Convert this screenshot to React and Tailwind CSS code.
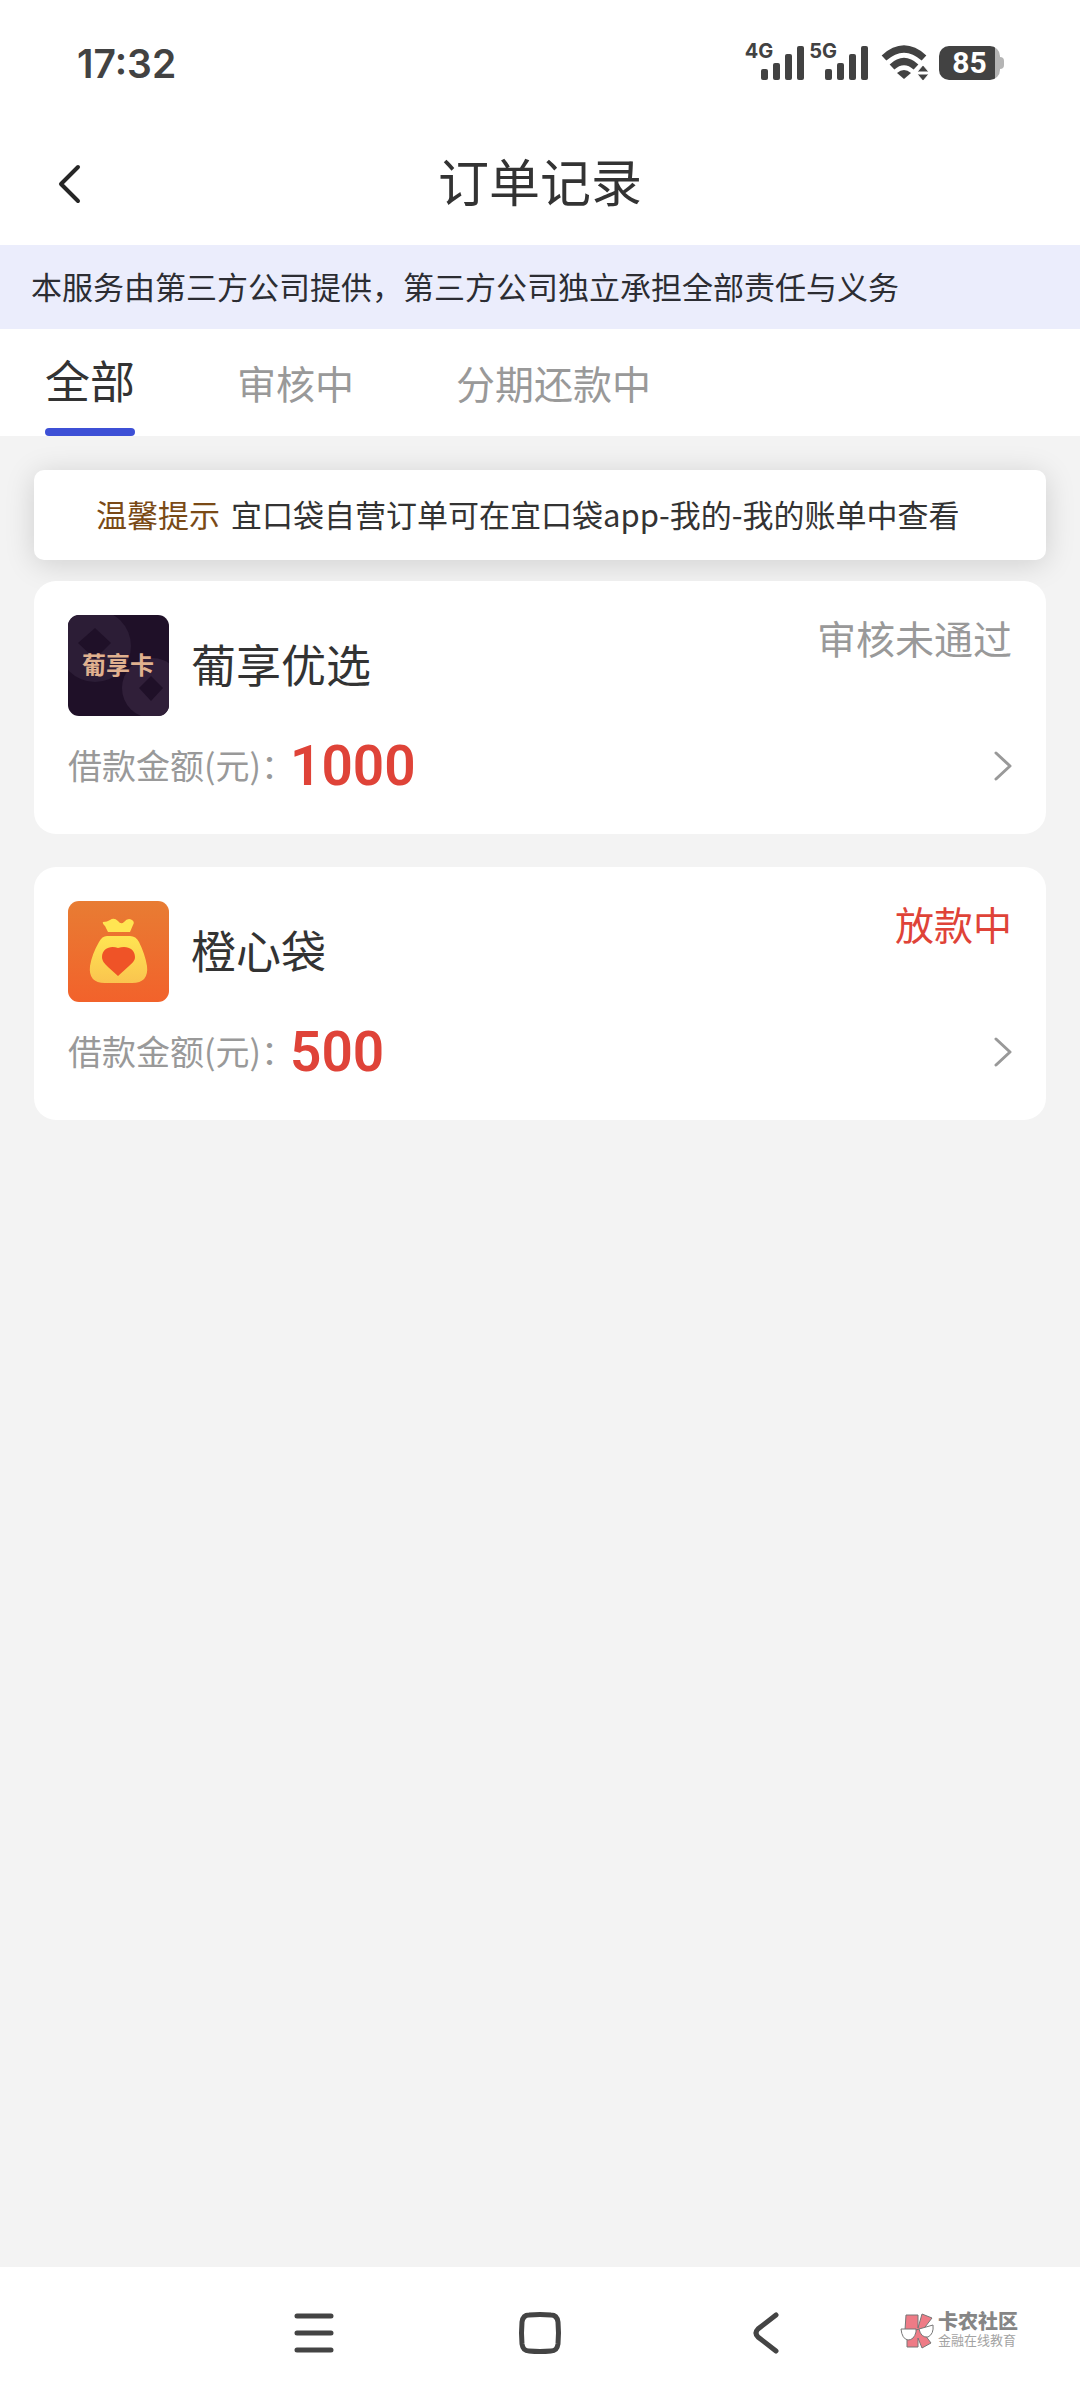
import React, { useState } from 'react';

const TABS = ['全部', '审核中', '分期还款中'];

const ORDERS = [
  { id: 1, name: '葡享优选', amount: '1000', status: '审核未通过', tone: 'text-[#999999]', Logo: PuxiangLogo },
  { id: 2, name: '橙心袋', amount: '500', status: '放款中', tone: 'text-[#df4338]', Logo: ChengxinLogo },
];

function PuxiangLogo() {
  return (
    <svg viewBox="0 0 101 101" className="h-full w-full" aria-hidden="true">
      <rect width="101" height="101" fill="#1f1028" />
      <circle cx="27" cy="31" r="36" fill="#2c1d36" />
      <path d="M27 13 43 28 27 44 10 28Z" fill="#1f1028" />
      <circle cx="84" cy="73" r="30" fill="#301f39" />
      <path d="M83 61 95 73 83 86 71 73Z" fill="#1f1028" />
      <text
        x="50"
        y="59"
        textAnchor="middle"
        fontSize="24"
        fontWeight="700"
        fill="#e0b18f"
        fontFamily="'Noto Sans CJK SC', sans-serif"
      >
        葡享卡
      </text>
    </svg>
  );
}

function ChengxinLogo() {
  return (
    <svg viewBox="0 0 101 101" className="h-full w-full" aria-hidden="true">
      <defs>
        <linearGradient id="orangeBg" x1="0" y1="0" x2="0" y2="1">
          <stop offset="0" stopColor="#e87c33" />
          <stop offset="1" stopColor="#f2622b" />
        </linearGradient>
        <linearGradient id="bag" x1="0" y1="0" x2="0" y2="1">
          <stop offset="0" stopColor="#ffe552" />
          <stop offset="1" stopColor="#fac44f" />
        </linearGradient>
      </defs>
      <rect width="101" height="101" fill="url(#orangeBg)" />
      <path
        d="M35 21C38 21 40 20 42 19Q46 16 50 20Q53 24 56 21Q60 16 64 19Q67 21 65 24L62 31H40L37 25Q34 22 35 21Z"
        fill="#ffe552"
      />
      <path
        d="M39 35H62Q68 35 71 41Q77 53 79 65Q81 82 64 82H37Q20 82 22 65Q24 53 31 41Q34 35 39 35Z"
        fill="url(#bag)"
      />
      <path d="M50 47C43 44 34 47 34 56C34 60 37 63 40 66L50 75L61 65C64 62 67 60 67 56C67 47 58 44 50 47Z" fill="#ef5327" />
    </svg>
  );
}

function Signal({ label }) {
  return (
    <span className="flex">
      <span className="-mr-3 self-start text-[20px] leading-4 font-bold">{label}</span>
      <svg width="44" height="40" viewBox="0 0 44 40" fill="currentColor" aria-hidden="true">
        <rect x="0" y="26" width="7" height="11" rx="2" />
        <rect x="12" y="20" width="7" height="17" rx="2" />
        <rect x="24" y="11" width="7" height="26" rx="2" />
        <rect x="36" y="3" width="7" height="34" rx="2" />
      </svg>
    </span>
  );
}

function StatusBar() {
  return (
    <div className="flex h-[122px] items-center justify-between pt-1 pr-[76px] pl-[77px] font-['Inter','Noto_Sans',sans-serif] text-[#424242]">
      <time className="text-[39px] leading-none font-semibold">17:32</time>
      <div className="flex items-center">
        <div className="flex gap-1">
          <Signal label="4G" />
          <Signal label="5G" />
        </div>
        <svg className="ml-3" width="48" height="36" viewBox="0 0 48 36" fill="none" aria-label="Wi-Fi">
          <path d="M3 13Q23 -5 43 13" stroke="currentColor" strokeWidth="7" />
          <path d="M11 22Q23 11 35 22" stroke="currentColor" strokeWidth="7" />
          <path d="M16 28Q23 22 30 28L23 34Z" fill="currentColor" />
          <path d="M36 27 42 20 48 27Z M36 29 42 36 48 29Z" fill="currentColor" stroke="#fff" strokeWidth="1" />
        </svg>
        <div className="ml-2.5 flex items-center">
          <span className="flex h-[34px] w-[61px] items-center justify-center rounded-[10px] bg-[linear-gradient(90deg,#424242_56px,#b5b5b5_56px)] font-['Roboto',sans-serif] text-[30px] leading-none font-bold text-white">
            85
          </span>
          <span className="h-3 w-1 rounded-r-full bg-[#b5b5b5]" />
        </div>
      </div>
    </div>
  );
}

function OrderCard({ order }) {
  const { Logo } = order;
  return (
    <li>
      <a href={`#order-${order.id}`} className="block rounded-[22px] bg-white p-[34px]">
        <div className="flex items-start justify-between">
          <div className="flex items-center gap-[22px]">
            <span className="h-[101px] w-[101px] overflow-hidden rounded-[11px]">
              <Logo />
            </span>
            <h2 className="pb-1 text-[45px] leading-none">{order.name}</h2>
          </div>
          <span className={`text-[39px] leading-[44px] ${order.tone}`}>{order.status}</span>
        </div>
        <div className="mt-4 flex h-[68px] items-center">
          <span className="w-[222px] pb-0.5 text-[34px] leading-none whitespace-nowrap text-[#999999]">借款金额(元)：</span>
          <span className="font-['Roboto','Noto_Sans',sans-serif] text-[55px] leading-none font-semibold text-[#df4338]">
            {order.amount}
          </span>
          <svg
            className="ml-auto"
            width="18"
            height="30"
            viewBox="0 0 18 30"
            fill="none"
            stroke="#999999"
            strokeWidth="3"
            strokeLinecap="round"
            strokeLinejoin="round"
            aria-hidden="true"
          >
            <path d="M2 2 16 15 2 28" />
          </svg>
        </div>
      </a>
    </li>
  );
}

function Watermark() {
  return (
    <div className="absolute top-[43px] right-[62px] flex items-center gap-0.5 font-['Liberation_Sans','Noto_Sans_CJK_SC',sans-serif]">
      <svg width="36" height="40" viewBox="0 0 36 40" stroke="#777777" aria-hidden="true">
        <path d="M6 5H18V18L22 4 32 8 22 21 31 33 22 38 18 28V37H7V22L5 20Z" fill="#ee7b86" strokeWidth="1" />
        <path d="M1 19H16V22Q14 30 8 30 2 29 1 19Z" fill="#fff" strokeWidth="1" />
        <path d="M19 19 33 15Q34 24 28 27 21 28 19 19Z" fill="#fff" strokeWidth="1" />
        <path d="M16 20 19 19" strokeWidth="1" />
      </svg>
      <div className="flex flex-col">
        <span className="text-[20px] leading-[22px] font-black text-[#868686]">卡农社区</span>
        <span className="text-[13px] leading-4 text-[#a3a3a3]">金融在线教育</span>
      </div>
    </div>
  );
}

function SystemNav() {
  return (
    <nav className="relative flex h-[133px] justify-center bg-white pb-[2px] text-[#444444]">
      <button type="button" aria-label="最近任务" className="flex w-[226px] items-center justify-center">
        <svg width="40" height="44" viewBox="0 0 40 44" stroke="currentColor" strokeWidth="5" strokeLinecap="round">
          <path d="M3 5H37M3 22H37M3 39H37" />
        </svg>
      </button>
      <button type="button" aria-label="主屏幕" className="flex w-[226px] items-center justify-center">
        <svg width="44" height="44" viewBox="0 0 44 44" fill="none" stroke="currentColor" strokeWidth="5">
          <path d="M11 4Q22 3 33 4Q39 4 40 11Q41 22 40 33Q39 40 33 40Q22 41 11 40Q5 40 4 33Q3 22 4 11Q5 4 11 4Z" />
        </svg>
      </button>
      <button type="button" aria-label="返回" className="flex w-[226px] items-center justify-center">
        <svg
          width="28"
          height="44"
          viewBox="0 0 28 44"
          fill="none"
          stroke="currentColor"
          strokeWidth="5"
          strokeLinecap="round"
        >
          <path d="M24 4 6 18Q2 22 6 26L24 40" />
        </svg>
      </button>
      <Watermark />
    </nav>
  );
}

export default function App() {
  const [active, setActive] = useState(TABS[0]);

  return (
    <div className="flex min-h-screen flex-col bg-[#f3f3f3] font-['Noto_Sans_CJK_SC',sans-serif] text-[#333333]">
      <div className="bg-white">
        <StatusBar />

        {/* Title bar */}
        <header className="grid h-[123px] grid-cols-[1fr_auto_1fr] items-center px-[56px]">
          <button type="button" aria-label="返回" className="justify-self-start">
            <svg
              width="26"
              height="42"
              viewBox="0 0 26 42"
              fill="none"
              stroke="#262626"
              strokeWidth="4"
              strokeLinecap="round"
              strokeLinejoin="round"
            >
              <path d="M22 4 5 21 22 38" />
            </svg>
          </button>
          <h1 className="pb-1.5 text-[51px] leading-none">订单记录</h1>
        </header>
      </div>

      <p className="flex h-[84px] items-center bg-[#ebedfc] px-[31px] pb-1 text-[31px] leading-none text-[#2c2d33]">
        本服务由第三方公司提供，第三方公司独立承担全部责任与义务
      </p>

      {/* Tabs */}
      <div role="tablist" className="flex h-[107px] gap-[102px] bg-white px-[45px]">
        {TABS.map((tab) => (
          <button
            key={tab}
            type="button"
            role="tab"
            aria-selected={tab === active}
            onClick={() => setActive(tab)}
            className={`flex flex-col justify-between ${
              tab === active ? 'text-[45px] leading-[102px] text-[#333333]' : 'text-[39px] leading-[106px] text-[#999999]'
            }`}
          >
            <span className="h-[99px]">{tab}</span>
            {tab === active && <span className="h-2 w-full rounded-full bg-[#3d50d6]" />}
          </button>
        ))}
      </div>

      <main className="flex-1 px-[34px] pt-[34px]">
        <p className="flex h-[90px] items-center gap-[11px] rounded-[10px] bg-white px-[62px] pb-1 text-[31px] leading-none whitespace-nowrap shadow-[0_4px_30px_rgba(0,0,0,0.15)]">
          <span className="text-[#7a4a16]">温馨提示</span>
          <span>宜口袋自营订单可在宜口袋app-我的-我的账单中查看</span>
        </p>

        <ul className="mt-[21px] flex flex-col gap-[33px]">
          {ORDERS.map((order) => (
            <OrderCard key={order.id} order={order} />
          ))}
        </ul>
      </main>

      <SystemNav />
    </div>
  );
}
